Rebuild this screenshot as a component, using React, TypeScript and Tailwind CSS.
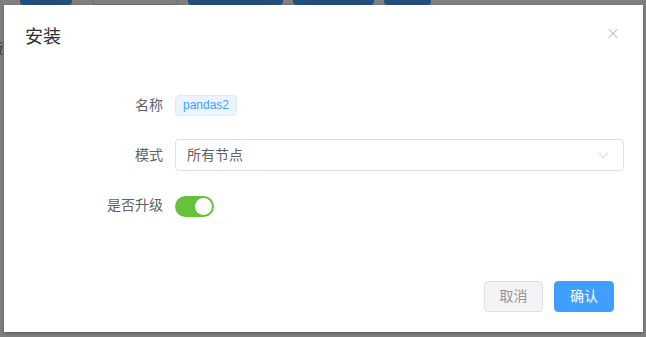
import React from "react";
import { X, ChevronDown, Search, Check, Download, List } from "lucide-react";

const FONT = {
  fontFamily: '"Helvetica Neue", "Liberation Sans", "Noto Sans CJK SC", sans-serif',
};

// page behind the dialog, mostly covered
const BackgroundPage = () => (
  <div className="flex flex-col">
    <div className="flex h-[5px] items-end overflow-hidden pl-5">
      <div className="flex h-7 w-[52px] shrink-0 items-center justify-center rounded-sm bg-[#409eff] text-white">
        <Search size={14} />
      </div>
      <div className="ml-5 flex h-7 w-[86px] shrink-0 items-center gap-1 rounded-sm border border-[#dcdfe6] bg-white pl-4 text-[13px] text-[#606266]">
        <Check size={12} />
        <span>已安装</span>
      </div>
      <div className="ml-[10px] flex h-7 w-[95px] shrink-0 items-center justify-center gap-1 rounded-sm bg-[#409eff] text-[13px] text-white">
        <Download size={12} />
        <span>可安装</span>
      </div>
      <div className="ml-[10px] flex h-7 w-[81px] shrink-0 items-center justify-center gap-1 rounded-sm bg-[#409eff] text-[13px] text-white">
        <List size={12} />
        <span>任务</span>
      </div>
      <div className="ml-[10px] flex h-7 w-[47px] shrink-0 items-center justify-center rounded-sm bg-[#409eff] text-white">
        <Check size={12} />
      </div>
    </div>
    <div className="ml-[-10px] mt-[34px] text-[13px] text-[#606266]">版本</div>
  </div>
);

const FormRow = ({ label, children }: { label: string; children: React.ReactNode }) => (
  <div className="flex h-8 items-center">
    <label className="w-[151px] shrink-0 pr-3 text-right text-[14px] text-[#606266]">{label}</label>
    <div className="flex flex-1 items-center">{children}</div>
  </div>
);

const InstallDialog = () => (
  <div className="ml-1 mt-[5px] flex h-[327px] w-[639px] flex-col bg-white shadow-[0_1px_3px_rgba(0,0,0,0.3)]">
    {/* header */}
    <div className="flex items-start justify-between pl-[21px] pr-5 pt-5 pb-[10px]">
      <span className="text-[18px] leading-6 text-[#303133]">安装</span>
      <button className="mr-[2px] flex h-4 w-4 items-center justify-center text-[#909399]">
        <X size={17} strokeWidth={1.2} />
      </button>
    </div>

    {/* body */}
    <div className="flex flex-1 flex-col gap-[18px] pl-5 pr-[19px] pt-[30px]">
      <FormRow label="名称">
        <span className="inline-flex h-[21px] items-center rounded border border-[#d9ecff] bg-[#ecf5ff] px-[7px] text-[12px] text-[#409eff]">
          pandas2
        </span>
      </FormRow>
      <FormRow label="模式">
        <div className="flex h-8 flex-1 items-center justify-between rounded border border-[#dcdfe6] pl-[11px] pr-[11px] text-[14px] text-[#606266]">
          <span>所有节点</span>
          <ChevronDown size={17} strokeWidth={1.1} className="text-[#c0c4cc]" />
        </div>
      </FormRow>
      <FormRow label="是否升级">
        <div className="mt-[2px] flex h-[21px] w-[39px] items-center justify-end rounded-full bg-[#67c23a] pr-[2px]">
          <div className="h-[17px] w-[17px] rounded-full bg-white" />
        </div>
      </FormRow>
    </div>

    {/* footer */}
    <div className="flex justify-end gap-[11px] pb-5 pr-[29px]">
      <button className="h-[31px] w-[59px] rounded border border-[#dcdfe6] bg-[#f4f4f5] text-[14px] text-[#909399]">
        取消
      </button>
      <button className="h-[31px] w-[60px] rounded border border-[#409eff] bg-[#409eff] text-[14px] text-white">
        确认
      </button>
    </div>
  </div>
);

export default function App() {
  return (
    <div className="relative h-[337px] w-[646px] overflow-hidden bg-white" style={FONT}>
      <BackgroundPage />
      <div className="absolute inset-0 bg-black/50">
        <InstallDialog />
      </div>
    </div>
  );
}
